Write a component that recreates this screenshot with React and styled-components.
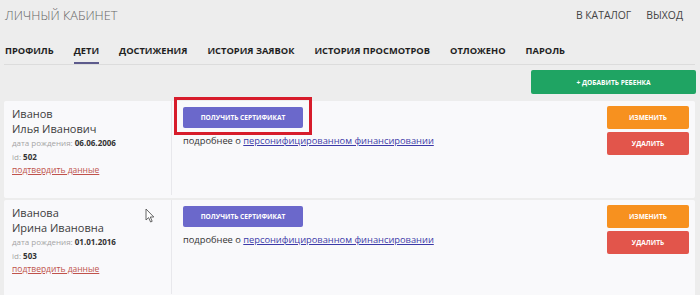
import React from 'react';
import styled, { createGlobalStyle } from 'styled-components';

const GlobalStyle = createGlobalStyle`
  body {
    margin: 0;
    background: #ededed;
    font-family: 'Open Sans', 'Liberation Sans', sans-serif;
  }
`;

const tabs = [
  'ПРОФИЛЬ',
  'ДЕТИ',
  'ДОСТИЖЕНИЯ',
  'ИСТОРИЯ ЗАЯВОК',
  'ИСТОРИЯ ПРОСМОТРОВ',
  'ОТЛОЖЕНО',
  'ПАРОЛЬ',
];

const children = [
  {
    last: 'Иванов',
    first: 'Илья Иванович',
    birth: '06.06.2006',
    id: 502,
    marked: true,
  },
  {
    last: 'Иванова',
    first: 'Ирина Ивановна',
    birth: '01.01.2016',
    id: 503,
    cursor: true,
  },
];

const App = () => {
  return (
    <Page>
      <GlobalStyle />
      <Header>
        <Title>ЛИЧНЫЙ КАБИНЕТ</Title>
        <TopLinks>
          <TopLink>В КАТАЛОГ</TopLink>
          <TopLink>ВЫХОД</TopLink>
        </TopLinks>
      </Header>

      <Tabs>
        {tabs.map((t) => (
          <Tab key={t} active={t === 'ДЕТИ'}>
            {t}
          </Tab>
        ))}
      </Tabs>

      <Toolbar>
        <AddButton>+ ДОБАВИТЬ РЕБЕНКА</AddButton>
      </Toolbar>

      <List>
        {children.map((c) => (
          <Card key={c.id}>
            <Info>
              <Name>{c.last}</Name>
              <Name>{c.first}</Name>
              <Meta>
                дата рождения: <b>{c.birth}</b>
              </Meta>
              <Meta>
                id: <b>{c.id}</b>
              </Meta>
              <Confirm href="#">подтвердить данные</Confirm>
            </Info>
            <Middle>
              <CertButton marked={c.marked}>ПОЛУЧИТЬ СЕРТИФИКАТ</CertButton>
              <More>
                подробнее о <a href="#">персонифицированном финансировании</a>
              </More>
            </Middle>
            <Actions>
              <ActionButton color="#f7911f">ИЗМЕНИТЬ</ActionButton>
              <ActionButton color="#e2554b">УДАЛИТЬ</ActionButton>
            </Actions>
            {c.cursor && (
              <Cursor viewBox="0 0 10 15">
                <path
                  d="M1 1 L1 12 L3.6 9.6 L5.6 14 L7.2 13.3 L5.3 9 L8.8 9 Z"
                  fill="#fff"
                  stroke="#555"
                  strokeWidth="0.9"
                  strokeLinejoin="round"
                />
              </Cursor>
            )}
          </Card>
        ))}
      </List>
    </Page>
  );
};

export default App;

const Page = styled.div`
  padding: 0 5px 0 4px;
`;

const Header = styled.header`
  display: flex;
  justify-content: space-between;
  align-items: center;
  height: 29px;
  padding: 0 12px 0 1px;
`;

const Title = styled.div`
  font-size: 12.7px;
  font-weight: 300;
  color: #666;
`;

const TopLinks = styled.div`
  display: flex;
  gap: 15px;
`;

const TopLink = styled.span`
  font-size: 10.4px;
  color: #444;
`;

const Tabs = styled.nav`
  display: flex;
  gap: 20px;
  margin-top: 10px;
  padding-left: 1px;
  border-bottom: 1px solid #dcdcdc;
`;

const Tab = styled.span`
  font-size: 9.3px;
  font-weight: 700;
  color: #1f1f1f;
  line-height: 14px;
  padding: 5px 0 4px;
  border-bottom: 2px solid ${(p) => (p.active ? '#5d5b8c' : 'transparent')};
`;

const Toolbar = styled.div`
  display: flex;
  justify-content: flex-end;
  margin: 5px -1px 0 0;
`;

const AddButton = styled.button`
  width: 165px;
  height: 24px;
  border: none;
  border-radius: 2px;
  background: #1fa463;
  color: #fff;
  font-family: inherit;
  font-size: 6.6px;
  font-weight: 700;
`;

const List = styled.div`
  display: flex;
  flex-direction: column;
  gap: 2px;
  margin-top: 7px;
`;

const Card = styled.div`
  position: relative;
  display: grid;
  grid-template-columns: 168px 1fr auto;
  height: 97px;
  background: #f9f9fb;
  border-radius: 2px;
`;

const Info = styled.div`
  padding: 5px 8px 0;
  border-right: 1px solid #e8e8ec;
  margin-bottom: 3px;
`;

const Name = styled.div`
  font-size: 11px;
  line-height: 15px;
  color: #3d3d3d;
`;

const Meta = styled.div`
  font-size: 8px;
  line-height: 13.5px;
  color: #a5a5a5;

  &:first-of-type {
    margin-top: 1px;
  }

  b {
    color: #333;
  }
`;

const Confirm = styled.a`
  display: block;
  font-size: 8.5px;
  line-height: 13px;
  color: #c0534c;
`;

const Middle = styled.div`
  padding: 6px 0 0 11px;
`;

const CertButton = styled.button`
  position: relative;
  display: block;
  width: 120px;
  height: 21px;
  border: none;
  border-radius: 2px;
  background: #6b68cb;
  color: #fff;
  font-family: inherit;
  font-size: 6.6px;
  font-weight: 700;

  &::after {
    content: '';
    display: ${(p) => (p.marked ? 'block' : 'none')};
    position: absolute;
    top: -10px;
    left: -9px;
    right: -9px;
    bottom: -7px;
    border: 3px solid #d71c2b;
  }
`;

const More = styled.div`
  margin-top: 5px;
  font-size: 9.3px;
  line-height: 16px;
  color: #333;

  a {
    color: #3c3aa8;
  }
`;

const Actions = styled.div`
  display: flex;
  flex-direction: column;
  gap: 3px;
  padding: 5px 6px 0 0;
`;

const ActionButton = styled.button`
  width: 82px;
  height: 23px;
  border: none;
  border-radius: 2px;
  background: ${(p) => p.color};
  color: #fff;
  font-family: inherit;
  font-size: 6.6px;
  font-weight: 700;
`;

const Cursor = styled.svg`
  position: absolute;
  left: 141px;
  top: 8px;
  width: 10px;
  height: 15px;
`;
